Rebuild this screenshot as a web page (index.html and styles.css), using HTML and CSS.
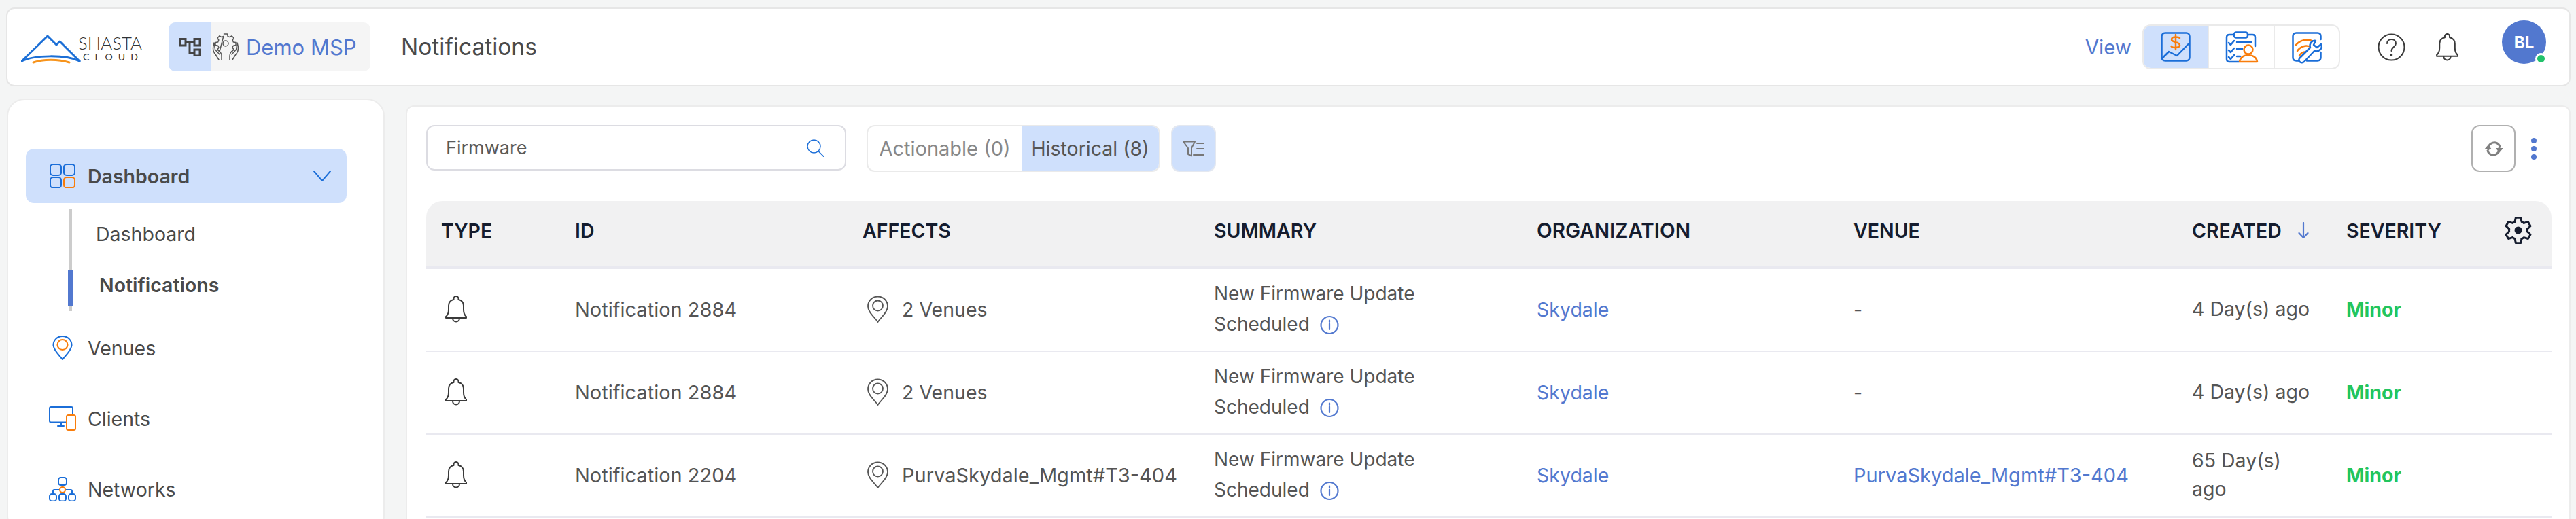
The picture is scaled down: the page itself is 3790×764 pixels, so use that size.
FILE: index.html
```html
<!DOCTYPE html>
<html lang="en">
<head>
<meta charset="utf-8">
<title>Notifications</title>
<link rel="stylesheet" href="styles.css">
</head>
<body>
<svg class="sprite" aria-hidden="true">
  <symbol id="bell" viewBox="0 0 36 40"><path class="s-dark" d="M3 31C5.500 29 7 26 7 21V15C7 10 10 7 14.500 6V4.500a3.500 3.500 0 0 1 7 0V6C26 7 29 10 29 15V21C29 26 30.500 29 33 31V33H3Z"/><path class="s-dark" d="M13 33.500a5 5 0 0 0 10 0"/></symbol>
  <symbol id="pin" viewBox="0 0 33 40"><path class="s-dark-thin" d="M16.500 1.500C8 1.500 2 8 2 16C2 25 12 32 16.500 39C21 32 31 25 31 16C31 8 25 1.500 16.500 1.500Z"/><circle class="s-dark-thin" cx="16.500" cy="15" r="7.500"/></symbol>
  <symbol id="info" viewBox="0 0 28 29"><circle class="s-link" cx="14" cy="14.500" r="12.500"/><path class="s-link" d="M14 12.500V21M14 7.500V10"/></symbol>
  <path id="tooth" d="M-5.060-12.500L-3.600-18.700H3.600L5.060-12.500A13.500 13.500 0 0 1 8.300-10.600"/>
</svg>

<header class="topbar">
  <svg class="logo" viewBox="0 0 180 52">
    <path class="logo-blue" d="M1 47L39 10L52 23L57 18L86 47"/>
    <path class="logo-blue" d="M1 47C20 38 65 37 86 47"/>
    <path class="logo-orange" d="M18 49C32 44 55 44 71 49"/>
    <text class="logo-name" x="84" y="30" textLength="94" lengthAdjust="spacingAndGlyphs">SHASTA</text>
    <text class="logo-sub" x="91" y="46" textLength="81">CLOUD</text>
  </svg>
  <div class="crumb">
    <span class="crumb-tree">
      <svg class="ico-tree" viewBox="0 0 32 27"><path class="s-tree" d="M1.500 1.500H10V11H1.500ZM23 1.500H31V11H23ZM23 17H31V26H23ZM10 6H23M16 6V21.500H23"/></svg>
    </span>
    <span class="crumb-org">
      <svg class="ico-hands" viewBox="0 0 40 40">
        <circle class="s-hand" cx="20" cy="15" r="4"/>
        <path class="s-hand" d="M17.500 1H22.500L23.200 4.500L26 5.600L29 3.800L32 7L30.200 10L31.300 13L35 13.500V17.500L31.300 18.200L30 21L32 24L29 27M11 27L8 24L10 21L8.700 18.200L5 17.500V13.500L8.700 13L9.800 10L8 7L11 3.800L14 5.600L16.800 4.500Z"/>
        <path class="s-hand" d="M3 14C1 20 1 27 5 31L10 39M3 14L4.500 24L11 31M14 39V33C14 29 11 26 8 24M37 14C39 20 39 27 35 31L30 39M37 14L35.500 24L29 31M26 39V33C26 29 29 26 32 24"/>
      </svg>
      <span class="org-name">Demo MSP</span>
    </span>
  </div>
  <h1 class="page-title">Notifications</h1>
  <div class="top-actions">
    <span class="view-label">View</span>
    <div class="view-group">
      <span class="view-cell view-on">
        <svg class="ico-view" viewBox="0 0 44 44">
          <rect class="s-blue" x="1.500" y="1.500" width="41" height="41" rx="5"/>
          <path class="s-blue" d="M2 39L12 29L24 35L41.500 17"/>
          <path class="s-orange" d="M28 9C26 7 17 6.500 16 10.500C15 16 28 14 28 19.500C27.500 24 17 24 15.500 21M22 4V26"/>
        </svg>
      </span>
      <span class="view-cell">
        <svg class="ico-view2" viewBox="0 0 46 46">
          <path class="s-blue" d="M13 5H6Q2 5 2 9V41Q2 45 6 45H20M33 5H40Q44 5 44 9V22"/>
          <rect class="s-blue" x="13" y="1.500" width="20" height="8" rx="3"/>
          <path class="s-blue" d="M5 17L8 20L13 14M5 28L8 31L13 25M5 38L8 41L13 35M17 16H38M17 26H25M17 37H22"/>
          <circle class="s-orange" cx="34" cy="27" r="6.500"/>
          <path class="s-orange" d="M21 45C22 38 28 35 34 35C40 35 46 38 47 45Z"/>
        </svg>
      </span>
      <span class="view-cell">
        <svg class="ico-view3" viewBox="0 0 44 44">
          <path class="s-blue" d="M11 42.500H6.500Q1.500 42.500 1.500 37.500V6.500Q1.500 1.500 6.500 1.500H37.500Q42.500 1.500 42.500 6.500V11M42.500 30V37.500Q42.500 42.500 37.500 42.500H22"/>
          <path class="s-orange" d="M6 19C13 11 24 10 32 14M8 28C13 21 21 19 27 22M11 35C14 30 18 29 21 30"/>
          <path class="s-wrench" d="M13 45Q9 43 11 39L27 23C25 17 30 12 35 13L32 19L37 23L43 18C46 24 40 30 33 28L18 44Q15 46 13 45Z"/>
        </svg>
      </span>
    </div>
    <svg class="ico-help" viewBox="0 0 41 41">
      <circle class="s-dark" cx="20.500" cy="20.500" r="19"/>
      <path class="s-dark" d="M14 15C14 11 17 9 20.500 9C24 9 27 11 27 15C27 20 20.500 20 20.500 26"/>
      <circle class="f-dark" cx="20.500" cy="32" r="1.800"/>
    </svg>
    <svg class="ico-bell-top"><use href="#bell"/></svg>
    <div class="avatar">BL<span class="avatar-dot"></span></div>
  </div>
</header>

<div class="layout">
  <nav class="sidebar">
    <a class="nav-item nav-open">
      <svg class="nav-ico" viewBox="0 0 40 36">
        <rect class="s-blue-thin" x="2" y="1" width="16" height="16" rx="4"/>
        <rect class="s-blue-thin" x="22" y="1" width="16" height="16" rx="4"/>
        <rect class="s-blue-thin" x="2" y="20" width="16" height="15.500" rx="4"/>
        <rect class="s-orange-thin" x="22" y="20" width="16" height="15.500" rx="4"/>
      </svg>
      <span class="nav-bold">Dashboard</span>
      <svg class="chev" viewBox="0 0 26 16"><path class="s-blue-thin" d="M1 1L13 15L25 1"/></svg>
    </a>
    <div class="sub">
      <a class="sub-item">Dashboard</a>
      <a class="sub-item sub-active">Notifications</a>
    </div>
    <a class="nav-item">
      <svg class="nav-ico" viewBox="0 0 40 36">
        <path class="s-blue-thin" d="M20 1C12 1 6.500 7 6.500 14C6.500 21 15 29 20 35C25 29 33.500 21 33.500 14C33.500 7 28 1 20 1Z"/>
        <circle class="s-orange-thin" cx="20" cy="13.500" r="7.500"/>
      </svg>
      <span>Venues</span>
    </a>
    <a class="nav-item">
      <svg class="nav-ico" viewBox="0 0 40 36">
        <path class="s-blue-thin" d="M25 23.500H3Q1 23.500 1 21.500V3Q1 1 3 1H33Q35 1 35 3V13"/>
        <path class="s-blue-thin" d="M18 24V29M13 29H22"/>
        <rect class="s-orange-thin" x="26" y="13" width="13" height="22" rx="2.500"/>
        <path class="s-orange-thin" d="M30 14H35"/>
      </svg>
      <span>Clients</span>
    </a>
    <a class="nav-item">
      <svg class="nav-ico" viewBox="0 0 40 36">
        <rect class="s-blue-thin" x="14" y="1" width="12" height="11" rx="3.500"/>
        <rect class="s-blue-thin" x="1" y="25" width="10" height="10.500" rx="3.500"/>
        <rect class="s-blue-thin" x="15" y="25" width="10" height="10.500" rx="3.500"/>
        <rect class="s-blue-thin" x="29" y="25" width="10" height="10.500" rx="3.500"/>
        <path class="s-blue-thin" d="M20 12V15M6 25V21Q6 19 8 19H16M24 19H32Q34 19 34 21V25M20 23V25"/>
        <circle class="s-orange-thin" cx="20" cy="19" r="4"/>
      </svg>
      <span>Networks</span>
    </a>
  </nav>

  <main class="panel">
    <div class="toolbar">
      <div class="search">
        <span class="search-text">Firmware</span>
        <svg class="ico-search" viewBox="0 0 26 26"><circle class="s-search" cx="10.500" cy="10.500" r="9.500"/><path class="s-search" d="M17 17.500L25 25.500"/></svg>
      </div>
      <div class="toggle">
        <span class="toggle-off">Actionable (0)</span>
        <span class="toggle-on">Historical (8)</span>
      </div>
      <span class="filter-btn">
        <svg class="ico-filter" viewBox="0 0 32 24"><path class="s-grey" d="M1 1.500H18L13 11V22.500L8 20V11ZM21 4H31M21 12H31M16 21H31"/></svg>
      </span>
      <span class="refresh-btn">
        <svg class="ico-refresh" viewBox="0 0 30 24"><path class="s-grey-heavy" d="M7 13V10C8 5 13 2 18 3C21 4 23 6 24 9M23 11V14C22 19 17 22 12 21C9 20 7 18 6 15"/><path class="f-grey" d="M1 13L7 6L12 13ZM18 11L23 18L29 11Z"/></svg>
      </span>
      <span class="more-btn"><i></i><i></i><i></i></span>
    </div>

    <div class="table">
      <div class="row head">
        <span>TYPE</span><span>ID</span><span>AFFECTS</span><span>SUMMARY</span><span class="head-org">ORGANIZATION</span><span>VENUE</span>
        <span class="head-sort">CREATED<svg class="ico-sort" viewBox="0 0 16 24"><path class="s-link" d="M8 1V23M1.500 16L8 23L14.500 16"/></svg></span>
        <span>SEVERITY</span>
        <svg class="ico-gear" viewBox="-20 -20 40 40">
          <g class="gear"><use href="#tooth"/><use href="#tooth" transform="rotate(60)"/><use href="#tooth" transform="rotate(120)"/><use href="#tooth" transform="rotate(180)"/><use href="#tooth" transform="rotate(240)"/><use href="#tooth" transform="rotate(300)"/></g>
          <circle class="gear-dot" r="5.500"/>
        </svg>
      </div>

      <div class="row">
        <svg class="ico-bell"><use href="#bell"/></svg>
        <span class="wide">Notification 2884</span>
        <span class="affects"><svg class="ico-pin"><use href="#pin"/></svg>2 Venues</span>
        <span class="summary">New Firmware Update<br>Scheduled<svg class="ico-info"><use href="#info"/></svg></span>
        <a class="link">Skydale</a>
        <span>-</span>
        <span class="created">4 Day(s) ago</span>
        <span class="minor">Minor</span>
      </div>
      <div class="row">
        <svg class="ico-bell"><use href="#bell"/></svg>
        <span class="wide">Notification 2884</span>
        <span class="affects"><svg class="ico-pin"><use href="#pin"/></svg>2 Venues</span>
        <span class="summary">New Firmware Update<br>Scheduled<svg class="ico-info"><use href="#info"/></svg></span>
        <a class="link">Skydale</a>
        <span>-</span>
        <span class="created">4 Day(s) ago</span>
        <span class="minor">Minor</span>
      </div>
      <div class="row">
        <svg class="ico-bell"><use href="#bell"/></svg>
        <span class="wide">Notification 2204</span>
        <span class="affects wide"><svg class="ico-pin"><use href="#pin"/></svg>PurvaSkydale_Mgmt#T3-404</span>
        <span class="summary">New Firmware Update<br>Scheduled<svg class="ico-info"><use href="#info"/></svg></span>
        <a class="link">Skydale</a>
        <a class="link wide">PurvaSkydale_Mgmt#T3-404</a>
        <span class="created">65 Day(s) ago</span>
        <span class="minor">Minor</span>
      </div>
    </div>
  </main>
</div>
</body>
</html>
```
FILE: styles.css
```css
* { box-sizing: border-box; }
html { height: 764px; overflow: hidden; }
body {
  margin: 0;
  padding: 11px 8px 0 9px;
  height: 764px;
  overflow: hidden;
  background: #f4f5f5;
  font-family: Inter, "Noto Sans", sans-serif;
  font-size: 28.500px;
  color: #555;
}
.sprite { display: none; }
svg { display: block; flex: none; fill: none; stroke-linecap: round; stroke-linejoin: round; }
a { color: inherit; text-decoration: none; }

/* stroke palette */
.s-dark { stroke: #3a3a3a; stroke-width: 2; fill: none; }
.s-dark-thin { stroke: #555; stroke-width: 1.800; fill: none; }
.f-dark { fill: #3a3a3a; }
.s-link { stroke: #5278cf; stroke-width: 2.200; fill: none; }
.s-blue { stroke: #1b6ed8; stroke-width: 2.500; fill: none; }
.s-orange { stroke: #f97d0b; stroke-width: 2.500; fill: none; }
.s-wrench { stroke: #1b6ed8; stroke-width: 2.500; fill: #fff; }
.s-blue-thin { stroke: #1b6ed8; stroke-width: 2; fill: none; }
.s-orange-thin { stroke: #f97d0b; stroke-width: 2; fill: none; }
.s-search { stroke: #1b6ed8; stroke-width: 1.500; fill: none; }
.s-grey { stroke: #777; stroke-width: 2; fill: none; }
.s-grey-heavy { stroke: #808080; stroke-width: 3; fill: none; }
.f-grey { fill: #808080; }
.s-tree { stroke: #444; stroke-width: 3; fill: none; stroke-linecap: butt; stroke-linejoin: miter; }
.s-hand { stroke: #555; stroke-width: 1.500; fill: none; }

/* top bar */
.topbar {
  display: flex;
  align-items: center;
  height: 116px;
  padding: 0 34px 0 20px;
  background: #fff;
  border: 2px solid #e6e6e6;
  border-radius: 12px;
}
.logo { width: 180px; height: 52px; }
.logo-blue { stroke: #1c6fd6; stroke-width: 3; fill: none; }
.logo-orange { stroke: #f7941d; stroke-width: 3; fill: none; }
.logo-name { font-family: Lato, sans-serif; font-size: 26px; fill: #333; font-weight: 300; }
.logo-sub { font-family: Lato, sans-serif; font-size: 14px; fill: #333; }

.crumb { display: flex; width: 297px; height: 72px; margin-left: 37px; border-radius: 10px; overflow: hidden; background: #f5f5f5; }
.crumb-tree { display: flex; align-items: center; justify-content: center; width: 62px; background: #cfe0fc; }
.ico-tree { width: 32px; height: 27px; }
.crumb-org { display: flex; align-items: center; padding-left: 2px; }
.ico-hands { width: 40px; height: 40px; }
.org-name { margin-left: 10px; font-size: 31px; color: #5278cf; }
.page-title { margin: 0 0 0 45px; font-size: 33.500px; font-weight: 400; color: #4a4a4a; }

.top-actions { display: flex; align-items: center; align-self: stretch; margin-left: auto; }
.view-label { font-size: 29.500px; color: #5278cf; }
.view-group { display: flex; width: 291px; height: 66px; margin-left: 16px; border: 2px solid #eaeaea; border-radius: 12px; overflow: hidden; }
.view-cell { display: flex; align-items: center; justify-content: center; flex: 1; }
.view-cell + .view-cell { border-left: 2px solid #eaeaea; }
.view-on { background: #cfe0fc; }
.ico-view { width: 44px; height: 44px; }
.ico-view2 { width: 46px; height: 46px; overflow: visible; }
.ico-view3 { width: 44px; height: 44px; overflow: visible; }
.ico-help { width: 41px; height: 41px; margin-left: 55px; }
.ico-bell-top { width: 37px; height: 41px; margin-left: 43px; }
.avatar {
  position: relative;
  display: flex;
  align-items: center;
  justify-content: center;
  align-self: flex-start;
  width: 65px;
  height: 64px;
  margin: 17px 0 0 62px;
  border-radius: 50%;
  background: #5278cf;
  color: #fff;
  font-size: 24px;
  font-weight: 700;
}
.avatar-dot { position: absolute; right: -1px; bottom: -1px; width: 17px; height: 17px; border: 3px solid #fff; border-radius: 50%; background: #22c26b; }

/* layout */
.layout { display: flex; align-items: flex-start; gap: 31px; height: 619px; margin-top: 18px; overflow: hidden; }
.sidebar {
  flex: none;
  width: 556px;
  height: 640px;
  margin-left: 1px;
  padding: 72px 54px 0 26px;
  background: #fff;
  border: 2px solid #ececec;
  border-radius: 26px;
}
.nav-item { display: flex; align-items: center; height: 104px; padding-left: 34px; color: #4a4a4a; }
.nav-ico { width: 40px; height: 36px; margin-right: 17px; }
.nav-open { height: 80px; background: #cfe0fc; border-radius: 12px; }
.nav-bold { font-weight: 600; }
.chev { width: 26px; height: 16px; margin-left: auto; margin-right: 23px; }
.sub { height: 151px; margin: 8px 0 2px 64px; border-left: 4px solid #ccc; }
.sub-item { position: relative; display: flex; align-items: center; height: 75px; padding-left: 35px; color: #4a4a4a; }
.sub-active { padding-left: 40px; font-weight: 600; }
.sub-active::before { content: ""; position: absolute; left: -6px; top: 15px; width: 8px; height: 54px; background: #5278cf; }

/* main panel */
.panel {
  flex: 1;
  height: 640px;
  margin-top: 10px;
  padding: 27px 26px 0 28px;
  background: #fff;
  border: 2px solid #ececec;
  border-radius: 12px;
}
.toolbar { display: flex; align-items: flex-start; height: 69px; }
.search { display: flex; align-items: center; justify-content: space-between; width: 618px; height: 67px; padding: 0 30px 0 27px; border: 2px solid #dcdce2; border-radius: 12px; }
.search-text { font-size: 27px; color: #5a5a5a; }
.ico-search { width: 26px; height: 26px; }
.toggle { display: flex; width: 432px; height: 69px; margin-left: 30px; border: 2px solid #eaeaea; border-radius: 12px; overflow: hidden; }
.toggle-off { display: flex; align-items: center; justify-content: center; width: 226px; font-size: 29px; color: #888; }
.toggle-on { display: flex; align-items: center; justify-content: center; flex: 1; background: #cfe0fc; color: #555; }
.filter-btn { display: flex; align-items: center; justify-content: center; width: 66px; height: 69px; margin-left: 16px; background: #cfe0fc; border: 2px solid #e4e8f0; border-radius: 12px; }
.ico-filter { width: 32px; height: 24px; }
.refresh-btn { display: flex; align-items: center; justify-content: center; width: 65px; height: 69px; margin-left: auto; border: 2px solid #b0b0b0; border-radius: 12px; }
.ico-refresh { width: 30px; height: 24px; }
.more-btn { display: flex; flex-direction: column; align-items: center; justify-content: center; gap: 4px; width: 53px; height: 69px; }
.more-btn i { display: block; width: 8px; height: 8px; border-radius: 50%; background: #5278cf; }

/* table */
.table { margin-top: 43px; }
.row {
  display: grid;
  grid-template-columns: 197px 423px 517px 475px 466px 498px 227px 233px 40px;
  align-items: center;
  height: 122px;
  padding: 0 0 2px 22px;
  border-bottom: 2px solid #e9e9f0;
}
.head {
  height: 100px;
  padding-bottom: 10px;
  border-bottom-width: 4px;
  background: #f1f1f2;
  border-radius: 24px 24px 0 0;
  color: #151c2e;
  font-weight: 600;
}
.head-org { font-size: 29.500px; }
.head-sort { display: flex; align-items: center; }
.ico-sort { width: 16px; height: 24px; margin-left: 24px; }
.ico-gear { width: 40px; height: 40px; }
.gear { fill: none; stroke: #151c2e; stroke-width: 3; }
.gear-dot { fill: #151c2e; }
.ico-bell { width: 36px; height: 40px; margin-left: 4px; }
.affects { display: flex; align-items: center; gap: 19px; padding-left: 6px; }
.ico-pin { width: 33px; height: 40px; }
.summary { font-size: 28px; line-height: 45px; }
.ico-info { display: inline-block; width: 28px; height: 29px; margin-left: 15px; vertical-align: -6px; }
.link { color: #5278cf; }
.wide { font-size: 29px; }
.created { max-width: 185px; line-height: 42px; }
.minor { color: #22c55e; font-weight: 700; }
```
